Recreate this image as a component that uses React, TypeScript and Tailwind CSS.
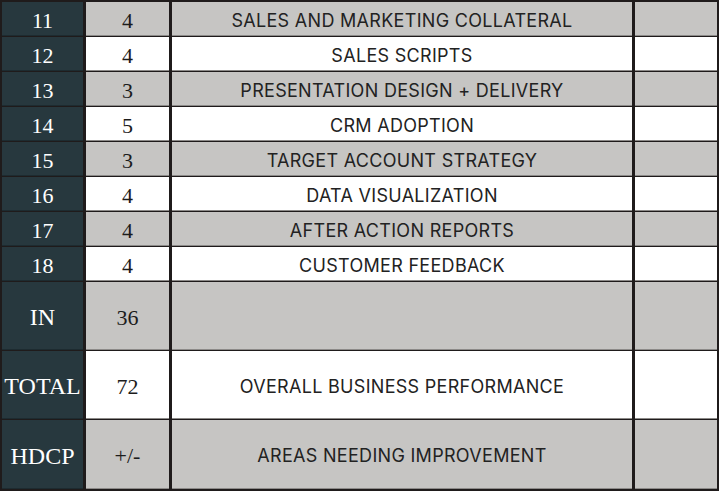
import React from "react";

type Row = { n: string; v: string; label: string; gray: boolean; tall?: boolean };

const rows: Row[] = [
  { n: "11", v: "4", label: "SALES AND MARKETING COLLATERAL", gray: true },
  { n: "12", v: "4", label: "SALES SCRIPTS", gray: false },
  { n: "13", v: "3", label: "PRESENTATION DESIGN + DELIVERY", gray: true },
  { n: "14", v: "5", label: "CRM ADOPTION", gray: false },
  { n: "15", v: "3", label: "TARGET ACCOUNT STRATEGY", gray: true },
  { n: "16", v: "4", label: "DATA VISUALIZATION", gray: false },
  { n: "17", v: "4", label: "AFTER ACTION REPORTS", gray: true },
  { n: "18", v: "4", label: "CUSTOMER FEEDBACK", gray: false },
  { n: "IN", v: "36", label: "", gray: true, tall: true },
  { n: "TOTAL", v: "72", label: "OVERALL BUSINESS PERFORMANCE", gray: false, tall: true },
  { n: "HDCP", v: "+/-", label: "AREAS NEEDING IMPROVEMENT", gray: true, tall: true },
];

const serif = { fontFamily: '"Liberation Serif", "Times New Roman", serif' };
const sans = { fontFamily: 'Inter, "Noto Sans", sans-serif' };

export default function App() {
  return (
    <div className="w-[719px] h-[491px] bg-white overflow-hidden">
      <div className="w-[719px] bg-[#1f1b1b] pt-[2px] pl-[2px] pr-[2px] pb-[3px] grid grid-cols-[81px_83px_460px_82px] gap-x-[3px] gap-y-[1px]">
        {rows.map((r, i) => {
          const h = r.tall ? (i === rows.length - 1 ? "h-[69px]" : "h-[68px]") : "h-[34px]";
          const bg = r.gray ? "bg-[#c6c5c3]" : "bg-white";
          return (
            <React.Fragment key={i}>
              <div
                className={`${h} bg-[#27383e] border-b border-[#1d2b30] flex items-center justify-center pt-[3px] text-white ${r.tall ? "text-[24px]" : "text-[22px]"}`}
                style={serif}
              >
                {r.n}
              </div>
              <div
                className={`${h} ${bg} border-b border-[#8c8a88] flex items-center justify-center pt-[3px] text-[#1c1c1c] text-[22px]`}
                style={serif}
              >
                {r.v}
              </div>
              <div
                className={`${h} ${bg} border-b border-[#8c8a88] flex items-center justify-center pt-[3px] text-[#222222] text-[18px] tracking-[0.3px]`}
                style={sans}
              >
                {r.label}
              </div>
              <div className={`${h} ${bg} border-b border-[#8c8a88]`} />
            </React.Fragment>
          );
        })}
      </div>
    </div>
  );
}
